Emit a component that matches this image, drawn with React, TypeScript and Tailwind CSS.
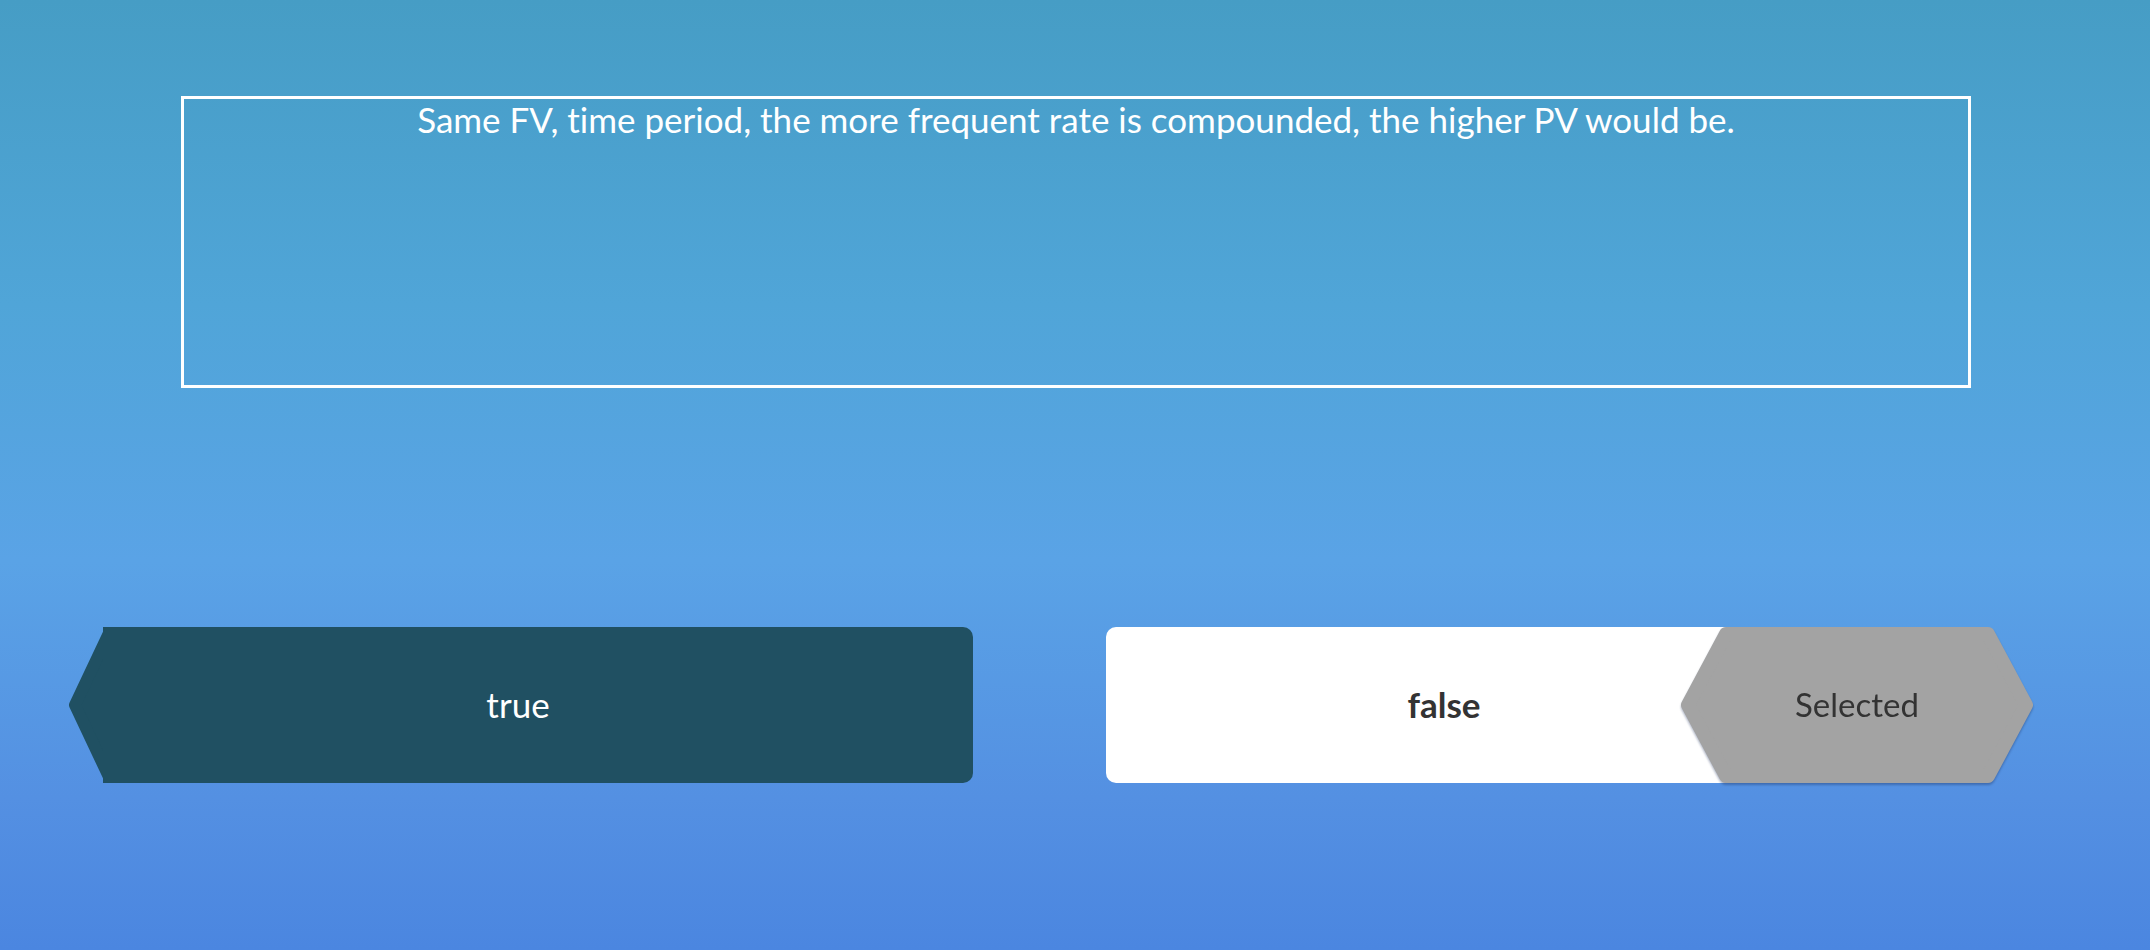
import React from 'react';

const font = "font-['Lato','Noto_Sans',sans-serif] [font-variant-ligatures:none]";

function LeftPoint({ color }: { color: string }) {
  // arrow tip on the left side of the answer card
  return (
    <svg width="46" height="156" viewBox="0 0 46 156" className="block shrink-0">
      <path
        d="M46 6 L40 6 L6 78 L40 150 L46 150 Z"
        fill={color}
        stroke={color}
        strokeWidth="12"
        strokeLinejoin="round"
      />
    </svg>
  );
}

function SelectedBadge() {
  return (
    <div className="absolute left-[575px] top-0 w-[352px] h-[156px] flex items-center justify-center drop-shadow-[0_2px_1px_rgba(20,40,90,0.35)]">
      <svg width="352" height="156" viewBox="0 0 352 156" className="absolute inset-0">
        <path
          d="M45 7 L307 7 L345 78 L307 149 L45 149 L7 78 Z"
          fill="#a3a3a3"
          stroke="#a3a3a3"
          strokeWidth="14"
          strokeLinejoin="round"
        />
      </svg>
      <span className={`relative text-[33px] text-[#333333] ${font}`}>Selected</span>
    </div>
  );
}

export default function App() {
  return (
    <div className="w-full h-screen overflow-hidden bg-[linear-gradient(180deg,#469dc5_0%,#50a5d8_32%,#5aa3e6_59%,#5490e2_84%,#4b86e0_100%)] pt-[96px]">
      {/* Question */}
      <div className="ml-[181px] w-[1790px] h-[292px] border-[3px] border-white">
        <p className={`text-center text-white text-[35px] leading-[40px] ${font}`}>
          Same FV, time period, the more frequent rate is compounded, the higher PV would be.
        </p>
      </div>

      {/* Answers */}
      <div className="mt-[239px] flex pl-[69px]">
        <div className="flex w-[904px] h-[156px] cursor-pointer">
          <LeftPoint color="#205062" />
          <div className="flex-1 -ml-[12px] bg-[#205062] rounded-r-[10px] flex items-center justify-center pr-[40px] pb-[2px]">
            <span className={`text-white text-[35px] ${font}`}>true</span>
          </div>
        </div>

        <div className="relative ml-[133px] w-[884px] h-[156px] bg-white rounded-[10px] flex items-center justify-center pr-[208px] pb-[2px] cursor-pointer">
          <span className={`text-[#333333] font-bold text-[35px] ${font}`}>false</span>
          <SelectedBadge />
        </div>
      </div>
    </div>
  );
}
